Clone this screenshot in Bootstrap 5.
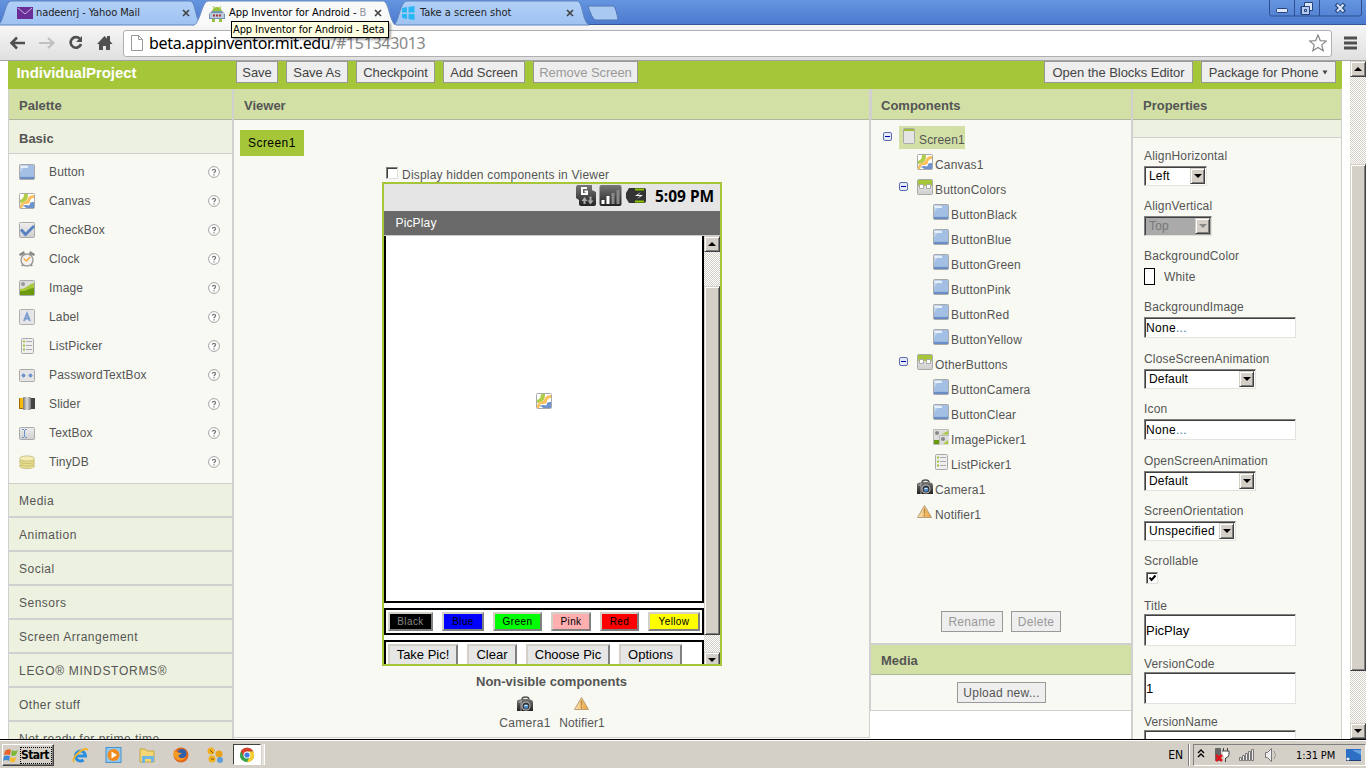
<!DOCTYPE html>
<html lang="en">
<head>
<meta charset="utf-8">
<title>App Inventor for Android - Beta</title>
<link href="https://cdn.jsdelivr.net/npm/bootstrap@5.3.0/dist/css/bootstrap.min.css" rel="stylesheet">
<style>
body{width:1366px;height:768px;overflow:hidden;font:12px/16px "Liberation Sans",Arial,sans-serif;color:#555;background:#fff;letter-spacing:.1px}
svg{display:block;flex:none}
.tah{font-family:"DejaVu Sans Condensed","DejaVu Sans",sans-serif;font-size:11px;letter-spacing:-.1px;color:#222}
.strip{height:25px;background:linear-gradient(#6595df,#4b79cf)}
.strip-art{left:0;top:0}
.tab-lbl{height:26px;white-space:nowrap}
.t1{width:158px;margin-left:17px}
.xx{margin-top:8px}
.tip{left:231px;top:21px;width:158px;height:17px;background:#ffffe1;border:1px solid #000;line-height:15px;padding-left:1px;color:#000;z-index:5;box-shadow:2px 2px 2px #0005;white-space:nowrap}
.toolbar{height:36px;background:linear-gradient(#f6f6f6,#e0e0e0);border-bottom:1px solid #a3a3a3;padding-left:9px}
.omni{width:1209px;height:27px;margin-left:8px;margin-top:1px;border:1px solid #b0b0b0;border-radius:3px;background:#fff;padding-left:6px}
.url{font:16px/24px "Noto Sans","Open Sans",sans-serif;color:#000;margin-left:5px;letter-spacing:-.33px}
.url i{font-style:normal;color:#888}
.page{height:678px}
.content{width:1342px;padding-left:8px}
.topbar{height:28px;background:#a5c639;padding-left:8.5px;color:#fff;font-weight:700;font-size:15px;letter-spacing:-.05px}
.topbar .pname{width:219.5px;line-height:24px}
.gbtn{border:1px solid #999;background:#eee;color:#444;height:22px;line-height:21px;text-align:center;padding:0;border-radius:0;font-size:13px;font-weight:400;letter-spacing:-.05px;flex:none}
.gbtn.sm1{font-size:12px;height:21px;line-height:20px;letter-spacing:.3px;color:#555}
.gbtn.off{color:#999}
.hd{height:31px;background:#d2e0a6;border-bottom:1px solid #b0b5a0;padding-left:10px;line-height:33px;font-weight:700;font-size:13px;color:#555;flex:none;letter-spacing:0}
.panel{background:#f8f9f3}
.cat{height:34px;background:#edf1df;border-bottom:2px solid #d0d0d0;line-height:35px;padding-left:10px;font-size:12px;letter-spacing:.5px}
.cat.first{font-weight:700;font-size:13px;border-bottom-width:1px;height:34px;line-height:38px;letter-spacing:0}
.plist{padding-top:3px;height:330px;border-bottom:1px solid #d0d0d0}
.plist>div{height:29px;padding-left:10px;letter-spacing:.15px}
.plist span{width:159px;margin-left:14px}
.pal{width:226px;border-left:1px solid #d0d0d0;border-right:2px solid #d0d0d0}
.view{width:636px;border-right:1px solid #d0d0d0}
.comp{width:261px}
.props{width:211px;border-left:2px solid #d0d0d0;border-right:1px solid #d0d0d0}
.scr1{margin:10px 0 0 6px;width:64px;height:26px;background:#a5c639;color:#000;line-height:27px;padding-left:8px;font-size:12px;letter-spacing:.45px}
.cb{width:12px;height:12px;border:1px solid;border-color:#808080 #e0e0e0 #e0e0e0 #808080;box-shadow:inset 1px 1px #404040;background:#fff;flex:none}
.phone{width:340px;height:484px;border:2px solid #a5c639;margin-left:148px;background:#fff;overflow:hidden}
.stat{height:27px;background:#e5e5e5;padding-right:4px}
.ptitle{height:25px;background:#696969;border-bottom:1px solid #ccc;color:#fff;line-height:24px;padding-left:11.5px;letter-spacing:.15px}
.box2{border:2px solid #000;width:320px;flex:none}
.xb{border:2px solid;border-color:#d4d0c8 #808080 #808080 #d4d0c8;color:#000;text-align:center;flex:none;white-space:nowrap}
.cbn{height:19px;line-height:15px;font-size:10px;letter-spacing:.4px}
.obn{height:22px;line-height:18px;font-size:13px;background:#e6e6e6;letter-spacing:0}
.sb{width:16px;background:repeating-conic-gradient(#d4d0c8 0 25%,#fff 0 50%) 0 0/2px 2px;flex:none}
.sbb{width:16px;background:#d4d0c8;border:1px solid;border-color:#d4d0c8 #404040 #404040 #d4d0c8;box-shadow:inset 1px 1px #fff,inset -1px -1px #808080;flex:none}
.arr{height:16px}
.up{border:solid transparent;border-width:0 4px 4px;border-bottom-color:#000}
.dn{border:solid transparent;border-width:4px 4px 0;border-top-color:#000}
.tree{padding-top:4px;height:491px}
.tree>div{height:25px;align-items:flex-start}
.tree svg{margin-top:5px}
.tree span{margin:8px 0 0 2px;letter-spacing:.17px}
.l1{padding-left:46px}.l2{padding-left:62px}.lx{padding-left:28px}.lx svg.mn{margin:8px 9px 0 0}
.sel1{background:#d2e0a6;height:23px;width:66px;margin-top:2px}
.sel1 svg{margin-top:2px}.tree .sel1 span{margin-top:6px;margin-left:1px}
.pr{padding-left:11px;letter-spacing:.17px}
.h50{height:50px}.h51{height:51px}.h52{height:52px}.h45{height:45px}.h58{height:58px}
.ctl{background:#fff;border:1px solid;border-color:#808080 #e4e2dc #e4e2dc #808080;box-shadow:inset 1px 1px #404040;color:#000;margin-top:2px}
.inp{width:152px;height:21px;line-height:21px;padding-left:1px;font-size:12px;letter-spacing:.3px}
.inp i{font-style:normal;color:#3a78a8}
.tall{height:32px;line-height:31px;margin-top:0;font-size:13px;letter-spacing:0}
.sel{height:20px;line-height:17px;padding:1px 1px 1px 4px;font-size:12px;letter-spacing:.15px}
.sel .sbb{width:15px;height:16px}
.task{height:29px;border-top:1px solid #000;background:#d4d0c8;box-shadow:inset 0 1px #fff}
.start{width:52px;height:22px;margin:4px 0 0 2px;border:1px solid;border-color:#fff #404040 #404040 #fff;box-shadow:inset -1px -1px #808080}
.start b{outline:1px dotted #000;font:700 12px/15px "DejaVu Sans Condensed","DejaVu Sans",sans-serif;color:#000;letter-spacing:-.6px;margin-left:3px;width:30px}
.chr{width:28px;height:21px;border:1px solid;border-color:#404040 #fff #fff #404040;background:#fff}
.tray{height:22px;margin-top:4px;width:173px;border:1px solid;border-color:#808080 #fff #fff #808080}
</style>
</head>
<body class="d-flex flex-column">
<svg width="0" height="0" class="position-absolute">
<defs>
<linearGradient id="gg" x2="0" y2="1"><stop offset="0" stop-color="#eee"/><stop offset="1" stop-color="#cfcfcf"/></linearGradient>
<linearGradient id="gd" x2="0" y2="1"><stop offset="0" stop-color="#777"/><stop offset="1" stop-color="#222"/></linearGradient>
<linearGradient id="gt" x2="0" y2="1"><stop offset="0" stop-color="#b2d0f7"/><stop offset="1" stop-color="#9fc2f2"/></linearGradient>
<linearGradient id="go"><stop offset="0" stop-color="#fbe6bb"/><stop offset="1" stop-color="#ec9d2e"/></linearGradient>
<linearGradient id="gs"><stop offset="0" stop-color="#777"/><stop offset=".5" stop-color="#ddd"/><stop offset="1" stop-color="#777"/></linearGradient>
</defs>
<symbol id="btn" viewBox="0 0 16 16"><rect x=".5" y=".5" width="15" height="15" rx="1" fill="#9bb8df" stroke="#aaa9a9"/><path d="M1 1h8Q3 5 1 10z" fill="#bfd3ec"/><path d="M9 1h6v11H1v-2Q3 4 9 1z" fill="#a3bfe3"/><path d="M1 2h8v2H2z" fill="#e6effa"/><path d="M1 13h14v2H1z" fill="#6a8dc7"/></symbol>
<symbol id="cnv" viewBox="0 0 16 16"><rect x=".5" y=".5" width="15" height="15" rx="1" fill="#fff" stroke="#aaa"/><path d="M5 1h4c0 4-1 7-4 8l-4 1V7c3-1 4-3 4-6z" fill="#afcf4b"/><path d="M15 2v3c-3 0-3 1-4 3 0 3-3 3-5 3-2 0-2 2-3 4H1v-2c1-3 2-4 4-4 3-1 3-2 4-4 1-2 3-3 6-3z" fill="#fbbf5c"/><path d="M15 9v6H7c-1-2-3-1-3-2 0-1 2-1 4-1 2 1 3 0 3-2 1-1 2-1 4-1z" fill="#6c93cd"/></symbol>
<symbol id="chk" viewBox="0 0 16 16"><rect x=".5" y=".5" width="15" height="15" rx="1" fill="url(#gg)" stroke="#aaa"/><path d="M2 7.500l4.500 5L15 4" fill="none" stroke="#5680c2" stroke-width="2.800"/></symbol>
<symbol id="clk" viewBox="0 0 16 16"><path d="M0 3l5-3 1 3-5 2zM16 3l-5-3-1 3 5 2z" fill="#888"/><path d="M3 15l2-3M13 15l-2-3" stroke="#888" stroke-width="2"/><circle cx="8" cy="9" r="6" fill="#f3f1ee" stroke="#9a9a9a" stroke-width="1.400"/><path d="M4.500 7.500L7.500 10l3.500-4" fill="none" stroke="#efa83e" stroke-width="1.500"/></symbol>
<symbol id="img" viewBox="0 0 16 16"><rect x=".5" y=".5" width="15" height="15" rx="1" fill="#dedede" stroke="#aaa"/><path d="M1 9c6 0 9-5 14-6v12H1z" fill="#a8c93c"/><path d="M1 11c6 1 9-3 14-3v7H1z" fill="#6b9a0e"/><circle cx="4" cy="4" r="2" fill="#999"/></symbol>
<symbol id="lbl" viewBox="0 0 16 16"><rect x=".5" y=".5" width="15" height="15" rx="1" fill="#e6e6e8" stroke="#b0b0b0"/><path d="M5 12L8 4.500 11 12M6 9.500h4" fill="none" stroke="#7b9cd0" stroke-width="1.900"/></symbol>
<symbol id="lst" viewBox="0 0 16 16"><rect x="2.500" y=".5" width="12" height="15" rx="1" fill="#efefef" stroke="#aaa"/><path d="M7 3.500h6M7 7.500h6M7 11.500h6" stroke="#aaa"/><path d="M4 3.500h2M4 7.500h2M4 11.500h2" stroke="#9dc43b" stroke-width="2"/></symbol>
<symbol id="pwd" viewBox="0 0 16 16"><rect x=".5" y="2.500" width="15" height="12" rx="1" fill="#e4e4e4" stroke="#aaa"/><path d="M2.500 8.500h4M4.500 6.500v4M3 7l3 3M6 7l-3 3M9.500 8.500h4M11.500 6.500v4M10 7l3 3M13 7l-3 3" stroke="#7095cc"/></symbol>
<symbol id="sld" viewBox="0 0 16 16"><path d="M0 2h5v11H0z" fill="#f9b90b"/><path d="M0 2h1v11H0zM0 12h16v1H0z" fill="#9b6c00"/><path d="M12 2h4v11h-4z" fill="#444"/><rect x="4" y="1" width="8" height="13" rx="1" fill="url(#gs)"/></symbol>
<symbol id="txt" viewBox="0 0 16 16"><rect x=".5" y="2.500" width="15" height="12" rx="1" fill="url(#gg)" stroke="#aaa"/><path d="M3 4.500h2M6 4.500h2M3 12.500h2M6 12.500h2M5.500 5v7" stroke="#6c93cd"/></symbol>
<symbol id="tdb" viewBox="0 0 16 16"><g fill="#e8dd8a" stroke="#c2b878" stroke-width=".8"><ellipse cx="8" cy="12" rx="7.500" ry="2.600"/><ellipse cx="8" cy="9.500" rx="7.500" ry="2.600"/><ellipse cx="8" cy="7" rx="7.500" ry="2.600"/><ellipse cx="8" cy="4.500" rx="7.500" ry="2.600" fill="#f3ecb4"/></g></symbol>
<symbol id="hlp" viewBox="0 0 12 12"><circle cx="6" cy="6" r="5.400" fill="#fff" stroke="#a4a4a4"/><path d="M4.400 4.800c0-2 3.200-2 3.200 0C7.600 6 6 6 6 7.200M6 8.200v1.200" fill="none" stroke="#777" stroke-width="1.200"/></symbol>
<symbol id="scn" viewBox="0 0 14 16"><rect x="1.500" y=".5" width="11" height="15" rx="1" fill="#e5e5e5" stroke="#aaa"/><path d="M2 1h10v2H2z" fill="#9fc035"/></symbol>
<symbol id="arg" viewBox="0 0 16 16"><rect x=".5" y=".5" width="15" height="15" rx="1" fill="url(#gg)" stroke="#aaa"/><path d="M1 1h14v6H1z" fill="#a5c639"/><path d="M2.500 5.500h4v4h-4zM9.500 5.500h4v4h-4z" fill="#fff" stroke="#aaa"/></symbol>
<symbol id="ipk" viewBox="0 0 16 16"><path d="M.5.500h15v6h-9v9h-6z" fill="#dedede" stroke="#bbb"/><path d="M9 5l6-3v3.500H9z" fill="#a8c93c"/><path d="M1 11h5v4H1z" fill="#6b9a0e"/><path d="M7 7h9v9H7z" fill="#ddd"/><path d="M10 15l5-4v4z" fill="#a8c93c"/><circle cx="4" cy="4" r="2" fill="#888"/><circle cx="10" cy="10" r="2" fill="#888"/></symbol>
<symbol id="cam" viewBox="0 0 16 16"><path d="M5 3.500Q5 1 8.500 1T12 3.500" fill="none" stroke="#555" stroke-width="1.500"/><path d="M0 5l1-1 4-1h6l4 1 1 2v9H0z" fill="url(#gd)"/><path d="M1 6h3M4 4v11" stroke="#bbb" stroke-width=".8"/><circle cx="9" cy="10" r="4.500" fill="#bbb"/><circle cx="9" cy="10" r="3.500" fill="#333"/><circle cx="9" cy="10.500" r="2.200" fill="#4f8fd0"/><path d="M7.500 9.500h3" stroke="#d5ebff"/></symbol>
<symbol id="ntf" viewBox="0 0 16 16"><path d="M7.500 1.500L14.500 13.500H.5z" fill="url(#go)" stroke="#b8a078"/><path d="M7.500 4.500v5M7.500 10.500v2" stroke="#b48a4a" stroke-width="1.400"/></symbol>
<symbol id="mns" viewBox="0 0 9 9"><rect x=".5" y=".5" width="8" height="8" rx="1.500" fill="#e6eaf6" stroke="#5b6fb0"/><path d="M2 4.500h5" stroke="#0000b0"/></symbol>
</svg>

<header class="strip d-flex position-relative flex-shrink-0">
<svg class="strip-art position-absolute" width="1366" height="26">
<path d="M0 24.500H1366" stroke="#35589b"/>
<path d="M394 25C399 22 400 1 407 1H577c6 0 5 20 12 24z" fill="url(#gt)" stroke="#5d83bf"/>
<path d="M-2 25C4 22 5 1 11 1H190c6 0 5 20 12 24z" fill="url(#gt)" stroke="#5d83bf"/>
<path d="M193 26C200 24 202 1 208 1H383c6 0 6 20 13 25z" fill="#f9f9f9" stroke="#6d8cc0"/>
<path d="M194 25.500h202" stroke="#f6f6f6"/>
<path d="M588 6h25c3 0 5 14 5 14h-22c-4 0-8-14-8-14z" fill="#a9c9f3" stroke="#5076b4"/>
<path d="M1269.500 0v14q0 2 2 2h88q2 0 2-2V0M1294.500 0v16M1319.500 0v16" fill="none" stroke="#2d4e91"/>
<rect x="1276.500" y="8.500" width="11" height="4" rx="1" fill="#dbe7f8" stroke="#26437c"/>
<path d="M1304.500 2.500h8v8h-3v4h-8.500v-8h3.500z" fill="#dbe7f8" stroke="#26437c"/><path d="M1301.500 6.500h8v8h-8zM1304.500 9.500h2v2h-2z" fill="#b4cbef" stroke="#26437c"/>
<path d="M1336 4l8.500 8M1344.500 4l-8.500 8" stroke="#26437c" stroke-width="4"/><path d="M1337 4.500l6.500 7M1343.500 4.500l-6.500 7" stroke="#dbe7f8" stroke-width="2"/>
</svg>
<div class="tab-lbl tah t1 d-flex align-items-center position-relative"><svg width="16" height="12"><path d="M0 0h16v12H0z" fill="#6a2c96"/><path d="M1 1l7 6 7-6" fill="none" stroke="#cbb5e0"/></svg><span style="margin-left:3px">nadeenrj - Yahoo Mail</span></div>
<svg class="position-relative xx" style="margin-left:6px" width="10" height="10"><path d="M2 2l6 6M8 2L2 8" stroke="#444" stroke-width="1.700"/></svg>
<div class="tab-lbl tah d-flex align-items-center position-relative" style="width:158px;margin-left:18px"><svg width="16" height="17"><path d="M3 7a5 5 0 0 1 10 0z" fill="#9ac33c"/><path d="M4 1l2 3M12 1l-2 3" stroke="#9ac33c"/><path d="M0 9l3-3h10l3 3v5H0z" fill="#7295b2"/><path d="M1 8h14v5H1z" fill="#b9cbdc"/><path d="M4 10.500h8" stroke="#a33" stroke-width="2" stroke-dasharray="2 1"/><path d="M3 14h3v3H3zM10 14h3v3h-3z" fill="#9ac33c"/></svg><span style="margin-left:4px;color:#000;letter-spacing:-.05px">App Inventor for Android - <span class="text-secondary opacity-75">B</span></span></div>
<svg class="position-relative xx" style="margin-left:6px" width="10" height="10"><path d="M2 2l6 6M8 2L2 8" stroke="#444" stroke-width="1.700"/></svg>
<div class="tab-lbl tah d-flex align-items-center position-relative" style="width:154px;margin-left:18px"><svg width="15" height="14"><path d="M1 2l5-1v5.500H1zM7.500 1l6-1v6.500h-6zM1 8h5v5l-5-1zM7.500 8h6v6l-6-1z" fill="#27b8f3"/></svg><span class="ms-1" style="letter-spacing:0">Take a screen shot</span></div>
<svg class="position-relative xx" style="margin-left:10px" width="10" height="10"><path d="M2 2l6 6M8 2L2 8" stroke="#444" stroke-width="1.700"/></svg>
<div class="tip tah position-absolute">App Inventor for Android - Beta</div>
</header>

<div class="toolbar d-flex align-items-center flex-shrink-0">
<svg width="106" height="16" fill="none" stroke="#505050" stroke-width="2.600"><path d="M8 2.500L2.500 8 8 13.500M3 8h13"/><path d="M39 3l5.500 5-5.500 5M44 8H30" stroke="#c0c0c0" stroke-width="2.200"/><path d="M71 4a5.300 5.300 0 1 0 1 5"/><path d="M73 1v6h-6z" fill="#505050" stroke="none"/><path d="M88 9l7.500-8L98 3.500V1h3v5l2.500 3H101v6h-4v-4h-3v4h-4V9z" fill="#505050" stroke="none"/></svg>
<div class="omni d-flex align-items-center"><svg width="14" height="16"><path d="M1.500.5h7l4 4v11h-11zM8.500.5v4h4" fill="#fff" stroke="#999"/></svg><span class="url">beta.appinventor.mit.edu<i>/#151343013</i></span><svg class="ms-auto me-1" width="18" height="18"><path d="M9 1l2.300 5.600 6 .4-4.600 3.900 1.500 5.900L9 13.500l-5.200 3.300 1.500-5.900L.7 7l6-.4z" fill="#fff" stroke="#888" stroke-width="1.200"/></svg></div>
<svg width="14" height="14" style="margin-left:12px"><path d="M0 2h13M0 7h13M0 12h13" stroke="#505050" stroke-width="3"/></svg>
</div>

<main class="page d-flex flex-shrink-0 overflow-hidden">
<div class="content d-flex flex-column">
<div class="topbar d-flex flex-shrink-0"><span class="pname">IndividualProject</span>
<div class="gbtn" style="width:42px">Save</div><div class="gbtn" style="width:62px;margin-left:8px">Save As</div><div class="gbtn" style="width:79px;margin-left:8px">Checkpoint</div><div class="gbtn" style="width:82px;margin-left:8px">Add Screen</div><div class="gbtn off" style="width:105px;margin-left:8px">Remove Screen</div>
<div class="gbtn ms-auto" style="width:149px">Open the Blocks Editor</div><div class="gbtn d-flex align-items-center justify-content-center" style="width:135px;margin:0 6px 0 8px">Package for Phone<svg class="ms-1" width="6" height="5"><path d="M.5.500h5L3 4.500z" fill="#444"/></svg></div></div>
<div class="d-flex flex-grow-1" style="height:650px">
<section class="pal panel overflow-hidden"><div class="hd">Palette</div><div class="cat first">Basic</div>
<div class="plist">
<div class="d-flex align-items-center"><svg width="16" height="16"><use href="#btn"/></svg><span>Button</span><svg width="12" height="12"><use href="#hlp"/></svg></div>
<div class="d-flex align-items-center"><svg width="16" height="16"><use href="#cnv"/></svg><span>Canvas</span><svg width="12" height="12"><use href="#hlp"/></svg></div>
<div class="d-flex align-items-center"><svg width="16" height="16"><use href="#chk"/></svg><span>CheckBox</span><svg width="12" height="12"><use href="#hlp"/></svg></div>
<div class="d-flex align-items-center"><svg width="16" height="16"><use href="#clk"/></svg><span>Clock</span><svg width="12" height="12"><use href="#hlp"/></svg></div>
<div class="d-flex align-items-center"><svg width="16" height="16"><use href="#img"/></svg><span>Image</span><svg width="12" height="12"><use href="#hlp"/></svg></div>
<div class="d-flex align-items-center"><svg width="16" height="16"><use href="#lbl"/></svg><span>Label</span><svg width="12" height="12"><use href="#hlp"/></svg></div>
<div class="d-flex align-items-center"><svg width="16" height="16"><use href="#lst"/></svg><span>ListPicker</span><svg width="12" height="12"><use href="#hlp"/></svg></div>
<div class="d-flex align-items-center"><svg width="16" height="16"><use href="#pwd"/></svg><span>PasswordTextBox</span><svg width="12" height="12"><use href="#hlp"/></svg></div>
<div class="d-flex align-items-center"><svg width="16" height="16"><use href="#sld"/></svg><span>Slider</span><svg width="12" height="12"><use href="#hlp"/></svg></div>
<div class="d-flex align-items-center"><svg width="16" height="16"><use href="#txt"/></svg><span>TextBox</span><svg width="12" height="12"><use href="#hlp"/></svg></div>
<div class="d-flex align-items-center"><svg width="16" height="16"><use href="#tdb"/></svg><span>TinyDB</span><svg width="12" height="12"><use href="#hlp"/></svg></div>
</div>
<div class="cat">Media</div><div class="cat">Animation</div><div class="cat">Social</div><div class="cat">Sensors</div><div class="cat">Screen Arrangement</div><div class="cat" style="letter-spacing:.72px">LEGO® MINDSTORMS®</div><div class="cat">Other stuff</div><div class="cat">Not ready for prime time</div>
</section>

<section class="view panel d-flex flex-column" style="height:649px;border-bottom:1px solid #d0d0d0"><div class="hd">Viewer</div>
<div class="scr1 flex-shrink-0">Screen1</div>
<div class="d-flex flex-shrink-0" style="height:26px;padding:11px 0 0 152px"><div class="cb"></div><span style="margin-left:4px;letter-spacing:.21px">Display hidden components in Viewer</span></div>
<div class="phone d-flex flex-column flex-shrink-0">
<div class="stat d-flex justify-content-end flex-shrink-0">
<svg width="74" height="27"><path d="M2 1h15v5l4 2v12q0 2-2 2H6q-2 0-2-2v-4L1 14V3z" fill="url(#gd)"/><path d="M12 4H7v6h5V7.500H9.500" fill="none" stroke="#fff" stroke-width="2"/><path d="M8.500 20v-3H6.500l3-4 3 4h-2v3zM14.500 12.500v4h-2l3 4 3-4h-2v-4z" fill="#aaa"/><rect x="24.500" y="1" width="22" height="21" rx="2" fill="url(#gd)"/><path d="M28 16v4M33 12v8" stroke="#fff" stroke-width="3"/><path d="M38 9v11M43 6v14" stroke="#888" stroke-width="3"/><path d="M54 4h15q2 0 2 2v11q0 2-2 2H54l-3-5v-5z" fill="#333"/><path d="M60 5.500h9M60 17.500h9" stroke="#8bc400" stroke-width="2"/><path d="M66 8l-6 4h5l-3 3 6-4h-5z" fill="#fff"/></svg>
<span style="font:700 15.500px/24px 'Noto Sans',sans-serif;color:#000;margin-left:6px;width:61px;white-space:nowrap;letter-spacing:0">5:09 PM</span></div>
<div class="ptitle flex-shrink-0">PicPlay</div>
<div class="d-flex" style="height:428px">
<div class="d-flex flex-column" style="width:320px">
<div class="box2 d-flex" style="height:367px;border-top:0;padding:157px 0 0 150px"><svg width="16" height="16"><use href="#cnv"/></svg></div>
<div class="box2 d-flex" style="height:27px;margin-top:5px;padding:2px;gap:9px"><div class="xb cbn" style="width:45px;background:#000;color:#888">Black</div><div class="xb cbn" style="width:42px;background:#00f">Blue</div><div class="xb cbn" style="width:49px;background:#0f0">Green</div><div class="xb cbn" style="width:40px;background:#ffafaf">Pink</div><div class="xb cbn" style="width:39px;background:#f00">Red</div><div class="xb cbn" style="width:52px;background:#ff0">Yellow</div></div>
<div class="box2 d-flex" style="height:32px;margin-top:5px;padding:2px;gap:9px"><div class="xb obn" style="width:70px">Take Pic!</div><div class="xb obn" style="width:50px">Clear</div><div class="xb obn" style="width:84px">Choose Pic</div><div class="xb obn" style="width:63px">Options</div></div>
</div>
<div class="sb d-flex flex-column"><div class="sbb arr d-flex align-items-center justify-content-center"><div class="up"></div></div><div class="sbb" style="height:349px;margin-top:34px"></div><div class="sbb arr d-flex align-items-center justify-content-center" style="margin-top:17px"><div class="dn"></div></div></div>
</div></div>
<div class="fw-bold" style="font-size:13px;letter-spacing:0;padding-left:242px;margin-top:8px">Non-visible components</div>
<div class="d-flex" style="padding-left:265px;margin-top:6px;gap:8px"><div class="d-flex flex-column align-items-center" style="width:52px"><svg width="16" height="16"><use href="#cam"/></svg><span style="margin-top:3px;letter-spacing:.3px">Camera1</span></div><div class="d-flex flex-column align-items-center" style="width:46px"><svg width="16" height="16"><use href="#ntf"/></svg><span style="margin-top:3px">Notifier1</span></div></div>
</section>

<section class="comp">
<div class="panel" style="border-left:1px solid #d0d0d0;height:554px"><div class="hd" style="border-left:1px solid #d0d0d0;padding-left:9px">Components</div>
<div class="tree">
<div class="d-flex" style="padding-left:12px"><svg class="mn" style="margin:8px 7px 0 0" width="9" height="9"><use href="#mns"/></svg><div class="sel1 d-flex"><svg style="margin:2px 0 0 3px" width="14" height="16"><use href="#scn"/></svg><span style="margin-left:3px">Screen1</span></div></div>
<div class="d-flex l1"><svg width="16" height="16"><use href="#cnv"/></svg><span>Canvas1</span></div>
<div class="d-flex lx"><svg class="mn" width="9" height="9"><use href="#mns"/></svg><svg width="16" height="16"><use href="#arg"/></svg><span>ButtonColors</span></div>
<div class="d-flex l2"><svg width="16" height="16"><use href="#btn"/></svg><span>ButtonBlack</span></div>
<div class="d-flex l2"><svg width="16" height="16"><use href="#btn"/></svg><span>ButtonBlue</span></div>
<div class="d-flex l2"><svg width="16" height="16"><use href="#btn"/></svg><span>ButtonGreen</span></div>
<div class="d-flex l2"><svg width="16" height="16"><use href="#btn"/></svg><span>ButtonPink</span></div>
<div class="d-flex l2"><svg width="16" height="16"><use href="#btn"/></svg><span>ButtonRed</span></div>
<div class="d-flex l2"><svg width="16" height="16"><use href="#btn"/></svg><span>ButtonYellow</span></div>
<div class="d-flex lx"><svg class="mn" width="9" height="9"><use href="#mns"/></svg><svg width="16" height="16"><use href="#arg"/></svg><span>OtherButtons</span></div>
<div class="d-flex l2"><svg width="16" height="16"><use href="#btn"/></svg><span>ButtonCamera</span></div>
<div class="d-flex l2"><svg width="16" height="16"><use href="#btn"/></svg><span>ButtonClear</span></div>
<div class="d-flex l2"><svg width="16" height="16"><use href="#ipk"/></svg><span>ImagePicker1</span></div>
<div class="d-flex l2"><svg width="16" height="16"><use href="#lst"/></svg><span>ListPicker1</span></div>
<div class="d-flex l1"><svg width="16" height="16"><use href="#cam"/></svg><span>Camera1</span></div>
<div class="d-flex l1"><svg width="16" height="16"><use href="#ntf"/></svg><span>Notifier1</span></div>
</div>
<div class="d-flex" style="padding-left:70px;gap:8px"><div class="gbtn sm1 off" style="width:62px">Rename</div><div class="gbtn sm1 off" style="width:50px">Delete</div></div></div>
<div class="panel" style="border:1px solid #d0d0d0;border-right:0;height:68px"><div class="hd" style="border-top:1px solid #d0d0d0;line-height:31px">Media</div><div class="gbtn sm1" style="width:89px;margin:7px 0 0 86px">Upload new...</div></div>
</section>

<section class="props panel overflow-hidden"><div class="hd">Properties</div><div style="height:18px;background:#edf1df;border-bottom:1px solid #d0d0d0"></div>
<div class="pr" style="padding-top:10px">
<div class="h50">AlignHorizontal<div class="ctl sel d-flex justify-content-between" style="width:63px">Left<div class="sbb d-flex align-items-center justify-content-center"><div class="dn"></div></div></div></div>
<div class="h50">AlignVertical<div class="ctl sel d-flex justify-content-between" style="width:68px;background:#aaa;color:#777">Top<div class="sbb d-flex align-items-center justify-content-center"><div class="dn" style="border-top-color:#888"></div></div></div></div>
<div class="h51">BackgroundColor<div class="d-flex" style="margin-top:4px"><div style="width:11px;height:17px;border:1px solid #000;background:#fff"></div><span style="margin:1px 0 0 9px">White</span></div></div>
<div class="h52">BackgroundImage<div class="ctl inp">None<i>...</i></div></div>
<div class="h50">CloseScreenAnimation<div class="ctl sel d-flex justify-content-between" style="width:112px">Default<div class="sbb d-flex align-items-center justify-content-center"><div class="dn"></div></div></div></div>
<div class="h52">Icon<div class="ctl inp">None<i>...</i></div></div>
<div class="h50">OpenScreenAnimation<div class="ctl sel d-flex justify-content-between" style="width:112px">Default<div class="sbb d-flex align-items-center justify-content-center"><div class="dn"></div></div></div></div>
<div class="h50">ScreenOrientation<div class="ctl sel d-flex justify-content-between" style="width:92px;letter-spacing:.3px">Unspecified<div class="sbb d-flex align-items-center justify-content-center"><div class="dn"></div></div></div></div>
<div class="h45">Scrollable<div class="cb" style="margin:3px 0 0 2px"><svg width="10" height="10"><path d="M2.500 4.500l2 2.500 4-4.500" fill="none" stroke="#000" stroke-width="2"/></svg></div></div>
<div class="h58">Title<div class="ctl inp tall">PicPlay</div></div>
<div class="h58">VersionCode<div class="ctl inp tall">1</div></div>
<div class="h58">VersionName<div class="ctl inp tall"></div></div>
</div></section>
</div></div>
<div class="sb d-flex flex-column" style="margin-left:8px"><div class="sbb arr d-flex align-items-center justify-content-center"><div class="up"></div></div><div class="sbb" style="height:507px;margin-top:87px"></div><div class="sbb arr d-flex align-items-center justify-content-center" style="margin-top:52px"><div class="dn"></div></div></div>
</main>

<footer class="task d-flex flex-shrink-0">
<div class="start d-flex align-items-center"><svg width="15" height="16"><path d="M2 4q3-3 6-1l-1 5q-3-1-6 0z" fill="#e8622a"/><path d="M9 3q3 2 6 0l-2 5q-3 2-5 0z" fill="#7db83a"/><path d="M1 9q3-1 6 0l-1 5q-3-2-6 0z" fill="#3e8ad8"/><path d="M7.500 10q3 2 6 0l-2 5q-3 1-5-1z" fill="#f5bb2c"/></svg><b>Start</b></div>
<svg width="153" height="18" style="margin:7px 0 0 18px"><path d="M3.500 9h10a5 5 0 1 0-2 4" fill="none" stroke="#2b8ddd" stroke-width="3"/><path d="M2 15C-1 11 12-1 16 3" fill="none" stroke="#efb62d" stroke-width="1.800"/><rect x="34" y=".5" width="15" height="15" fill="#8fc8ee" stroke="#4a90c9"/><circle cx="41.500" cy="8" r="6" fill="#f28a1c"/><path d="M39.500 4.500v7l5.500-3.500z" fill="#fff"/><path d="M68 2h5l2 2h7v11H68z" fill="#f3d774" stroke="#c8a63e"/><path d="M70 9h12v6h-3v-3h-6v4h-3z" fill="#6fb5e6"/><circle cx="109" cy="8" r="7.500" fill="#e0661a"/><circle cx="110" cy="6.500" r="4.500" fill="#2f61ad"/><path d="M102 3q3 3 8 3l-4 3q2 4 8 1-4 6-10 2-4-4-2-9z" fill="#f59b23"/><circle cx="139" cy="4" r="3.500" fill="#f1b01e"/><circle cx="147" cy="7" r="3.500" fill="#e9a31b"/><circle cx="140" cy="12" r="3.500" fill="#f1b01e"/><circle cx="148" cy="13" r="3" fill="#5d9edb"/><path d="M138 3l3 3M139 12h3" stroke="#7a5200"/></svg>
<div class="chr" style="margin:4px 0 0 8px"><svg style="margin:2px 0 0 5px" width="16" height="16"><circle cx="8" cy="8" r="7.200" fill="#38a34a"/><path d="M1.800 4.300A7.200 7.200 0 0 1 14.300 4.500H8L4.500 9z" fill="#dc3c2c"/><path d="M14.300 4.500A7.200 7.200 0 0 1 8 15.200L11.500 8 8 4.500z" fill="#f8cd30"/><circle cx="8" cy="8" r="3.500" fill="#fff"/><circle cx="8" cy="8" r="2.600" fill="#3f7de0"/></svg></div>
<div style="width:3px;height:21px;margin:4px 0 0 1px;border-right:1px solid #fff;background:#e5e3de"></div>
<span class="tah ms-auto" style="line-height:31px;color:#000;font-size:12px">EN</span><div style="width:2px;height:22px;margin:4px 3px 0 5px;border-left:1px solid #808080;border-right:1px solid #fff"></div>
<div class="tray d-flex"><svg width="88" height="20" style="margin-left:-2px"><path d="M6 8l3-3 3 3M6 12l3-3 3 3" fill="none" stroke="#000" stroke-width="1.400"/><rect x="23" y="3" width="6" height="13" rx="1" fill="#666"/><path d="M30 6h7v4q-1 3-3.500 3V17M31.500 3v3M35.500 3v3" fill="#fff" stroke="#444"/><path d="M24 10l6 6M30 10l-6 6" stroke="#e0141a" stroke-width="2.500"/><path d="M47.500 12.500h2v3h-2zM50.500 10.500h2v5h-2zM53.500 8.500h2v7h-2zM56.500 6.500h2v9h-2zM59.500 4.500h2v11h-2z" fill="#eee" stroke="#777"/><path d="M73.500 7.500h2l4-4v13l-4-4h-2z" fill="#eee" stroke="#777"/><path d="M82 6q3 4 0 8" fill="none" stroke="#999"/></svg><span class="tah" style="color:#000;line-height:22px;margin-left:16px;width:50px;white-space:nowrap">1:31 PM</span><svg width="16" height="20"><rect x="0" y="4" width="15" height="11" fill="#2c6fc4"/><path d="M6 5h9v5z" fill="#67a3e4"/><path d="M0 15.500h15" stroke="#1d3e73"/><circle cx="2" cy="14" r="1.500" fill="#eee"/></svg></div>
</footer>
<script src="https://cdn.jsdelivr.net/npm/bootstrap@5.3.0/dist/js/bootstrap.bundle.min.js"></script>
</body>
</html>
